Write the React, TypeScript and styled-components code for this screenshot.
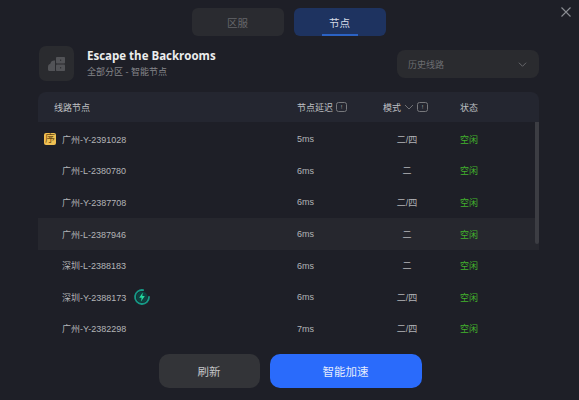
import React from "react";
import styled, { createGlobalStyle } from "styled-components";

const Global = createGlobalStyle`
  html, body { margin: 0; padding: 0; background: #1e1f27; }
  body { font-family: "Liberation Sans", "Noto Sans CJK SC", sans-serif; }
`;

const Page = styled.div`
  position: relative;
  width: 579px;
  height: 400px;
  overflow: hidden;
  background: #1e1f27;
  display: flex;
  flex-direction: column;
  align-items: stretch;
  box-sizing: border-box;
  padding: 8px 40px 0 38px;
`;

const Close = styled.svg`
  position: absolute;
  top: 7px;
  right: 8px;
  width: 10px;
  height: 10px;
  stroke: #8b8d93;
  stroke-width: 1.1;
  fill: none;
`;

const Tabs = styled.div`
  display: flex;
  justify-content: center;
  gap: 10px;
  flex: none;
`;

const Tab = styled.div<{ $active?: boolean }>`
  position: relative;
  width: 92px;
  height: 28px;
  border-radius: 6px;
  display: flex;
  align-items: center;
  justify-content: center;
  font-size: 10.5px;
  background: ${(p) => (p.$active ? "#1e3360" : "#2a2b30")};
  color: ${(p) => (p.$active ? "#d5dbe6" : "#66676b")};
`;

const TabBar = styled.span`
  position: absolute;
  bottom: 0;
  left: 28px;
  width: 36px;
  height: 2px;
  background: #2b62c4;
`;

const Header = styled.div`
  display: flex;
  align-items: center;
  margin-top: 10px;
  height: 35px;
  flex: none;
`;

const GameIcon = styled.div`
  width: 35px;
  height: 35px;
  margin-left: 1px;
  border-radius: 7px;
  background: #2a2b2f;
  display: flex;
  align-items: center;
  justify-content: center;
`;

const Titles = styled.div`
  margin-left: 13px;
  flex: 1;
  display: flex;
  flex-direction: column;
  gap: 3px;
`;

const Title = styled.div`
  font-family: "Open Sans", "Noto Sans CJK SC", sans-serif;
  font-size: 11.5px;
  line-height: 14px;
  font-weight: 700;
  color: #eceded;
`;

const Sub = styled.div`
  font-size: 9px;
  line-height: 12px;
  color: #85868a;
`;

const Select = styled.div`
  width: 142px;
  height: 28px;
  box-sizing: border-box;
  margin-top: 1px;
  padding: 0 12px 0 11px;
  border-radius: 8px;
  background: #2a2b2f;
  display: flex;
  align-items: center;
  justify-content: space-between;
  font-size: 9px;
  color: #6c6d71;
`;

const Table = styled.div`
  margin-top: 11px;
  flex: none;
  display: flex;
  flex-direction: column;
`;

const gridCols = `grid-template-columns: 243px 86px 77px 1fr;`;

const HeadRow = styled.div`
  display: grid;
  ${gridCols}
  height: 30px;
  align-items: center;
  padding-left: 16px;
  background: #242630;
  border-radius: 8px 8px 0 0;
  font-size: 9px;
  color: #bfc0c3;
`;

const HeadCell = styled.div`
  display: flex;
  align-items: center;
  gap: 3px;
`;

const InfoBox = styled.span`
  width: 11px;
  height: 10px;
  box-sizing: border-box;
  border: 1px solid #77787c;
  border-radius: 2.5px;
  display: inline-flex;
  align-items: center;
  justify-content: center;
  font-size: 6px;
  line-height: 1;
  color: #a8a9ac;
`;

const BodyWrap = styled.div`
  position: relative;
  height: 223px;
  overflow: hidden;
  padding-top: 1.5px;
  box-sizing: border-box;
`;

const Scroll = styled.div`
  position: absolute;
  right: 0;
  top: 0;
  width: 4px;
  height: 122px;
  border-radius: 0 0 2px 2px;
  background: #3c3d43;
`;

const Row = styled.div<{ $hover?: boolean }>`
  display: grid;
  ${gridCols}
  height: 31.6px;
  align-items: center;
  padding-left: 24px;
  background: ${(p) => (p.$hover ? "#26272e" : "transparent")};
  font-size: 9px;
  color: #b3b4b7;
`;

const NameCell = styled.div`
  position: relative;
  display: flex;
  align-items: center;
  gap: 7px;
`;

const Badge = styled.span`
  position: absolute;
  left: -18px;
  top: 50%;
  transform: translateY(-50%);
  width: 12px;
  height: 12px;
  border-radius: 2px;
  background: #f0c052;
  color: #6d4a12;
  font-size: 10px;
  line-height: 12px;
  text-align: center;
`;

const ModeCell = styled.div`
  width: 44px;
  margin-left: -6px;
  text-align: center;
`;

const LatencyCell = styled.div`
  margin-left: -8px;
`;

const Status = styled.div`
  color: #42b22c;
  margin-left: -8px;
`;

const Footer = styled.div`
  display: flex;
  justify-content: center;
  gap: 10px;
  margin-top: 9px;
  padding-left: 3px;
  flex: none;
`;

const Button = styled.div<{ $primary?: boolean }>`
  height: 34px;
  width: ${(p) => (p.$primary ? "152px" : "101px")};
  border-radius: 10px;
  display: flex;
  align-items: center;
  justify-content: center;
  font-size: 11.5px;
  background: ${(p) => (p.$primary ? "#2a6bfb" : "#333438")};
  color: ${(p) => (p.$primary ? "#e4ecfb" : "#c3c4c6")};
`;

const rows = [
  { name: "广州-Y-2391028", ms: "5ms", mode: "二/四", badge: true },
  { name: "广州-L-2380780", ms: "6ms", mode: "二" },
  { name: "广州-Y-2387708", ms: "6ms", mode: "二/四" },
  { name: "广州-L-2387946", ms: "6ms", mode: "二", hover: true },
  { name: "深圳-L-2388183", ms: "6ms", mode: "二" },
  { name: "深圳-Y-2388173", ms: "6ms", mode: "二/四", boost: true },
  { name: "广州-Y-2382298", ms: "7ms", mode: "二/四" },
];

const Chevron = ({ size = 9, color = "#6e6f73" }: { size?: number; color?: string }) => (
  <svg width={size} height={size} viewBox="0 0 10 10" fill="none" stroke={color} strokeWidth="1">
    <path d="M1 3l4 4 4-4" />
  </svg>
);

const Boost = () => (
  <svg width="18" height="18" viewBox="0 0 18 18" fill="none">
    <circle cx="9" cy="9" r="5.6" fill="#0f403f" />
    <path d="M10.2 2.1A7 7 0 1 0 16 9" stroke="#169a87" strokeWidth="1.8" strokeLinecap="round" />
    <path d="M9.8 4.6L6.2 9.8h2.4L8 13.4l3.8-5.4H9.3z" fill="#25dca0" />
  </svg>
);

export default function App() {
  return (
    <Page>
      <Global />
      <Close viewBox="0 0 10 10">
        <path d="M0.5 0.5l9 9M9.5 0.5l-9 9" />
      </Close>
      <Tabs>
        <Tab>区服</Tab>
        <Tab $active>
          节点
          <TabBar />
        </Tab>
      </Tabs>
      <Header>
        <GameIcon>
          <svg width="20" height="16" viewBox="0 0 20 16">
            <path
              d="M1 13.5V11C1 9.3 2 8.2 3.3 7.8 3.8 5.4 5.6 4.2 8 4.6V15H2.5C1.6 15 1 14.4 1 13.5z"
              fill="#525357"
            />
            <rect x="9" y="1" width="9" height="6.5" rx="0.8" fill="#525357" />
            <rect x="9" y="8.5" width="9" height="6.5" rx="0.8" fill="#525357" />
            <rect x="13" y="3.6" width="1.2" height="1.2" fill="#2a2b2f" />
            <rect x="13" y="11.2" width="1.2" height="1.2" fill="#2a2b2f" />
          </svg>
        </GameIcon>
        <Titles>
          <Title>Escape the Backrooms</Title>
          <Sub>全部分区 - 智能节点</Sub>
        </Titles>
        <Select>
          历史线路
          <Chevron />
        </Select>
      </Header>
      <Table>
        <HeadRow>
          <HeadCell>线路节点</HeadCell>
          <HeadCell>
            节点延迟<InfoBox>!</InfoBox>
          </HeadCell>
          <HeadCell>
            模式 <Chevron size={10} />
            <InfoBox>!</InfoBox>
          </HeadCell>
          <HeadCell>状态</HeadCell>
        </HeadRow>
        <BodyWrap>
          {rows.map((r) => (
            <Row key={r.name} $hover={r.hover}>
              <NameCell>
                {r.badge && <Badge>序</Badge>}
                {r.name}
                {r.boost && <Boost />}
              </NameCell>
              <LatencyCell>{r.ms}</LatencyCell>
              <ModeCell>{r.mode}</ModeCell>
              <Status>空闲</Status>
            </Row>
          ))}
          <Scroll />
        </BodyWrap>
      </Table>
      <Footer>
        <Button>刷新</Button>
        <Button $primary>智能加速</Button>
      </Footer>
    </Page>
  );
}
